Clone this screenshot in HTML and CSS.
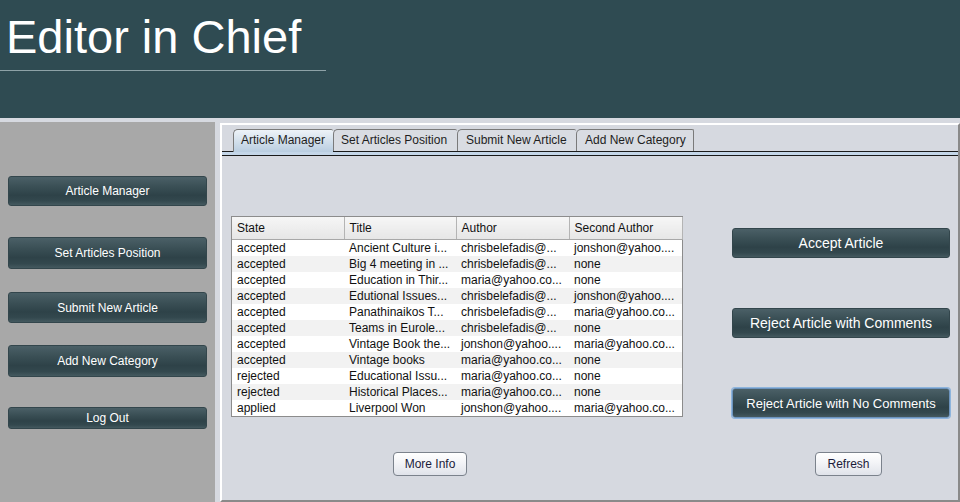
FILE: index.html
```html
<!DOCTYPE html>
<html>
<head>
<meta charset="utf-8">
<link rel="stylesheet" href="styles.css">
</head>
<body>
<header class="top">
  <h1 class="title">Editor in Chief</h1>
  <div class="rule"></div>
</header>
<div class="below">
  <aside class="side">
    <button class="dbtn s1">Article Manager</button>
    <button class="dbtn s2">Set Articles Position</button>
    <button class="dbtn s3">Submit New Article</button>
    <button class="dbtn s4">Add New Category</button>
    <button class="dbtn s5">Log Out</button>
  </aside>
  <main class="panel">
    <nav class="tabs">
      <span class="tab sel t1">Article Manager</span><span class="tab t2">Set Articles Position</span><span class="tab t3">Submit New Article</span><span class="tab last t4">Add New Category</span>
    </nav>
    <div class="tabline"></div>
    <div class="content">
      <div class="leftcol">
        <div class="tablebox">
          <table class="grid">
            <colgroup><col class="c1"><col class="c2"><col class="c3"><col class="c4"></colgroup>
            <thead>
              <tr><th>State</th><th>Title</th><th>Author</th><th>Second Author</th></tr>
            </thead>
            <tbody>
              <tr><td>accepted</td><td>Ancient Culture i...</td><td>chrisbelefadis@...</td><td>jonshon@yahoo....</td></tr>
              <tr><td>accepted</td><td>Big 4 meeting in ...</td><td>chrisbelefadis@...</td><td>none</td></tr>
              <tr><td>accepted</td><td>Education in Thir...</td><td>maria@yahoo.co...</td><td>none</td></tr>
              <tr><td>accepted</td><td>Edutional Issues...</td><td>chrisbelefadis@...</td><td>jonshon@yahoo....</td></tr>
              <tr><td>accepted</td><td>Panathinaikos T...</td><td>chrisbelefadis@...</td><td>maria@yahoo.co...</td></tr>
              <tr><td>accepted</td><td>Teams in Eurole...</td><td>chrisbelefadis@...</td><td>none</td></tr>
              <tr><td>accepted</td><td>Vintage Book the...</td><td>jonshon@yahoo....</td><td>maria@yahoo.co...</td></tr>
              <tr><td>accepted</td><td>Vintage books</td><td>maria@yahoo.co...</td><td>none</td></tr>
              <tr><td>rejected</td><td>Educational Issu...</td><td>maria@yahoo.co...</td><td>none</td></tr>
              <tr><td>rejected</td><td>Historical Places...</td><td>maria@yahoo.co...</td><td>none</td></tr>
              <tr><td>applied</td><td>Liverpool Won</td><td>jonshon@yahoo....</td><td>maria@yahoo.co...</td></tr>
            </tbody>
          </table>
        </div>
        <button class="lbtn more">More Info</button>
      </div>
      <div class="rightcol">
        <button class="dbtn big r1">Accept Article</button>
        <button class="dbtn big r2">Reject Article with Comments</button>
        <button class="dbtn big r3 focus">Reject Article with No Comments</button>
        <button class="lbtn refresh">Refresh</button>
      </div>
    </div>
  </main>
</div>
</body>
</html>
```

FILE: styles.css
```css
html, body {
  margin: 0;
  padding: 0;
}
body {
  width: 960px;
  height: 502px;
  overflow: hidden;
  background: #d6d9e0;
  font-family: "Liberation Sans", Arial, sans-serif;
}
.top {
  height: 118px;
  background: #2f4b52;
}
.title {
  margin: 0;
  padding: 10px 0 0 6px;
  font-weight: normal;
  font-size: 47px;
  line-height: 54px;
  color: #ffffff;
  font-family: "Liberation Sans", Arial, sans-serif;
}
.rule {
  margin-top: 6px;
  width: 326px;
  height: 1px;
  background: #8ea2a7;
}
.below {
  display: flex;
  margin-top: 4px;
  height: 380px;
}
.side {
  width: 215px;
  background: #a8a8a8;
  display: flex;
  flex-direction: column;
  align-items: flex-start;
}
.dbtn {
  font-family: "Liberation Sans", Arial, sans-serif;
  font-size: 12px;
  color: #ffffff;
  border: 1px solid #33464c;
  border-radius: 3px;
  background: linear-gradient(#4b6067 0%, #3a4f55 35%, #2e4248 65%, #33484e 85%, #44595f 100%);
  padding: 0;
  margin: 0;
  text-align: center;
}
.side .dbtn {
  width: 199px;
  margin-left: 8px;
}
.s1 { margin-top: 54px !important; height: 30px; }
.s2 { margin-top: 31px !important; height: 32px; }
.s3 { margin-top: 23px !important; height: 31px; }
.s4 { margin-top: 22px !important; height: 32px; }
.s5 { margin-top: 30px !important; height: 22px; }

.panel {
  margin-left: 5px;
  margin-top: 1px;
  flex: 1;
  border-top: 2px solid #ffffff;
  border-left: 2px solid #ffffff;
  border-right: 2px solid #8a8a8a;
  border-bottom: 2px solid #8a8a8a;
  display: flex;
  flex-direction: column;
}
.tabs {
  display: flex;
  margin-top: 4px;
  padding-left: 11px;
  height: 22px;
}
.tab {
  font-size: 12px;
  color: #1e1e1e;
  line-height: 21px;
  height: 22px;
  box-sizing: border-box;
  padding: 0 0 0 7px;
  border: 1px solid #7a7a7a;
  border-right: none;
  border-bottom: none;
  border-top-left-radius: 5px;
  border-top-right-radius: 2px;
  background: #d9dce2;
  white-space: nowrap;
}
.t1 { width: 100px; }
.t2 { width: 124px; }
.t3 { width: 119px; padding-left: 8px; }
.t4 { width: 118px; padding-left: 8px; }
.tab.last {
  border-right: 1px solid #7a7a7a;
}
.tab.sel {
  background: linear-gradient(#eef3f8 0%, #d3e0ec 50%, #b9cde0 100%);
  position: relative;
  z-index: 1;
  height: 23px;
}
.tabline {
  height: 3px;
  border-top: 1px solid #1a1a1a;
  border-bottom: 1px solid #1a1a1a;
  background: #c4d6e8;
}
.content {
  display: flex;
  flex: 1;
}
.leftcol {
  margin-left: 9px;
  width: 452px;
  display: flex;
  flex-direction: column;
  align-items: flex-start;
}
.tablebox {
  margin-top: 60px;
  width: 450px;
  border: 1px solid #8c8c8c;
  background: #ffffff;
  height: 199px;
}
.grid {
  border-collapse: collapse;
  table-layout: fixed;
  width: 450px;
  font-size: 12px;
  color: #111111;
}
.c1 { width: 112px; }
.c2 { width: 112px; }
.c3 { width: 113px; }
.c4 { width: 113px; }
.grid th {
  height: 22px;
  padding: 0 0 0 5px;
  text-align: left;
  font-weight: normal;
  background: linear-gradient(#f6f6f6, #e6e6e6);
  border-right: 1px solid #b4b4b4;
  border-bottom: 1px solid #a8a8a8;
  white-space: nowrap;
}
.grid td {
  height: 16px;
  line-height: 16px;
  padding: 0 0 0 5px;
  white-space: nowrap;
  overflow: hidden;
}
.grid tbody tr:nth-child(even) td {
  background: #f2f2f2;
}
.lbtn {
  font-family: "Liberation Sans", Arial, sans-serif;
  font-size: 12px;
  color: #1b1b3a;
  background: linear-gradient(#ffffff 0%, #f3f4f7 45%, #e0e3ea 100%);
  border: 1px solid #7b828c;
  border-radius: 4px;
  height: 24px;
  padding: 0;
}
.more {
  margin-top: 35px;
  margin-left: 162px;
  width: 74px;
}
.rightcol {
  margin-left: 49px;
  width: 218px;
  display: flex;
  flex-direction: column;
  align-items: flex-start;
}
.dbtn.big {
  width: 218px;
  height: 30px;
  font-size: 14px;
}
.r1 { margin-top: 72px !important; }
.r2 { margin-top: 50px !important; }
.r3 {
  margin-top: 50px !important;
  font-size: 13px !important;
}
.focus {
  border-color: #6c93bd;
  box-shadow: 0 0 0 1px #8db4dc;
}
.refresh {
  margin-top: 34px;
  margin-left: 83px;
  width: 67px;
}
```
